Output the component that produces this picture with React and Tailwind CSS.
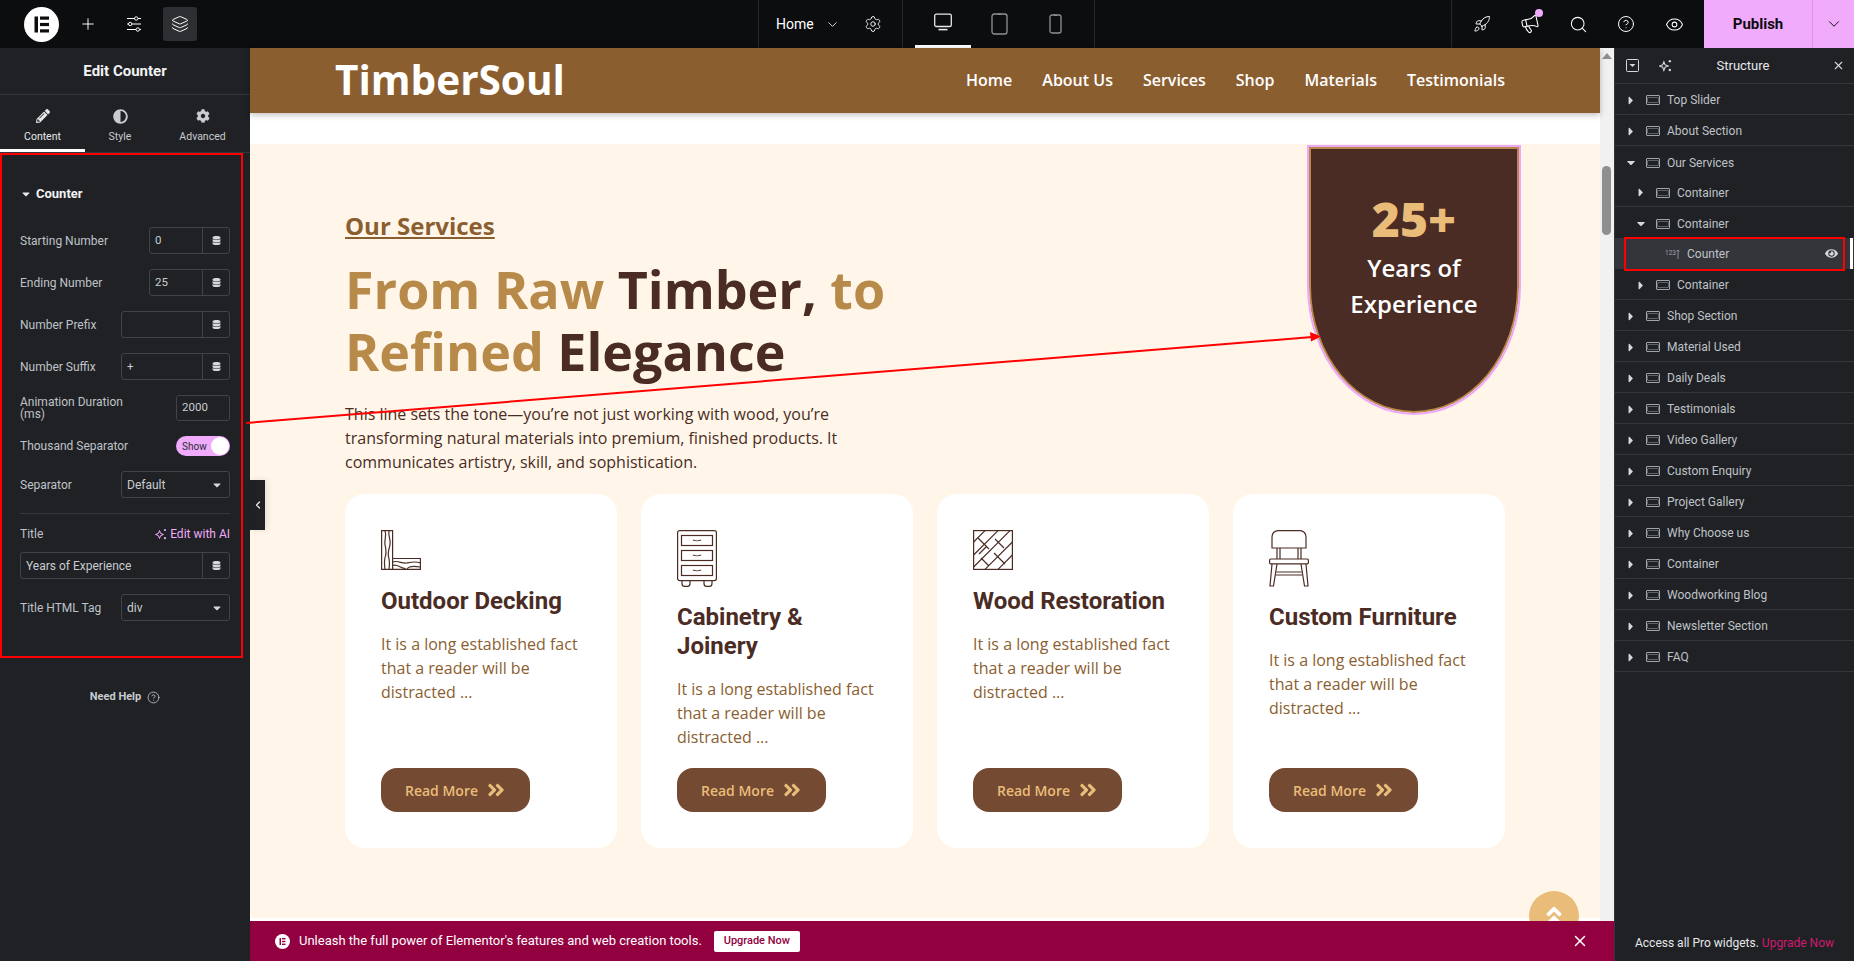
import { Rocket, Megaphone, Search, CircleHelp, Eye, Settings, ChevronDown, Layers, Plus, X, ChevronLeft } from 'lucide-react'
import { FaPencilAlt, FaAdjust, FaCog, FaDatabase, FaCaretDown, FaCaretRight, FaAngleDoubleRight, FaAngleDoubleUp, FaEye } from 'react-icons/fa'

const sans = "font-['Roboto','Liberation_Sans',sans-serif]"
const open = "font-['Open_Sans','Liberation_Sans',sans-serif]"

function ElementorLogo({ size = 35 }) {
  return (
    <svg width={size} height={size} viewBox="0 0 35 35">
      <circle cx="17.5" cy="17.5" r="17.5" fill="#fff" />
      <rect x="10.5" y="9.5" width="3.5" height="16" fill="#0c0d0e" />
      <rect x="16" y="9.5" width="9" height="3.2" fill="#0c0d0e" />
      <rect x="16" y="15.9" width="9" height="3.2" fill="#0c0d0e" />
      <rect x="16" y="22.3" width="9" height="3.2" fill="#0c0d0e" />
    </svg>
  )
}

function SlidersIcon() {
  return (
    <svg width="16" height="16" viewBox="0 0 16 16" fill="none" stroke="#fff" strokeWidth="1">
      <path d="M1 2.5h7.5M12 2.5h3M1 8h1.5M6 8h9M1 13.5h9M13.5 13.5H15" />
      <circle cx="10.2" cy="2.5" r="1.7" />
      <circle cx="4.2" cy="8" r="1.7" />
      <circle cx="11.8" cy="13.5" r="1.7" />
    </svg>
  )
}

function SparkIcon({ color = '#fff', size = 12 }) {
  return (
    <svg width={size} height={size} viewBox="0 0 12 12" fill={color}>
      <path d="M4.5 2.5 5.6 5.4 8.5 6.5 5.6 7.6 4.5 10.5 3.4 7.6.5 6.5 3.4 5.4Z" fill="none" stroke={color} strokeWidth="1" />
      <circle cx="10" cy="2" r="1.1" />
      <circle cx="10" cy="10.2" r="1.1" />
    </svg>
  )
}

function SectionIcon() {
  return (
    <svg width="14" height="10" viewBox="0 0 14 10" fill="none" stroke="#9da5ae" className="shrink-0">
      <rect x="0.5" y="0.5" width="13" height="9" rx="0.5" strokeWidth="1" />
      <path d="M2.5 2.5h9M2.5 7.5h9" strokeWidth="1" strokeDasharray="1 1" />
      <path d="M1 2.5v5M13 2.5v5" strokeWidth="1" />
    </svg>
  )
}

function MonitorIcon() {
  return (
    <svg width="20" height="19" viewBox="0 0 20 19" fill="none" stroke="#e6e8ea" strokeWidth="1.3">
      <rect x="1.7" y="1.2" width="16.6" height="12.3" rx="1.6" />
      <path d="M5.5 16.6h9" strokeWidth="1.6" />
    </svg>
  )
}

function TabletIcon() {
  return (
    <svg width="17" height="22" viewBox="0 0 17 22" fill="none" stroke="#8d9298" strokeWidth="1.3">
      <rect x="1" y="1" width="15" height="20" rx="2.2" />
      <path d="M7 1.3h3" />
    </svg>
  )
}

function PhoneIcon() {
  return (
    <svg width="13" height="20" viewBox="0 0 13 20" fill="none" stroke="#8d9298" strokeWidth="1.3">
      <rect x="1" y="1" width="11" height="18" rx="2" />
      <path d="M5 1.3h3" />
    </svg>
  )
}

function WoodIcon() {
  return (
    <svg width="40" height="40" viewBox="0 0 40 40" fill="none" stroke="#4a2c24" strokeWidth="1.2">
      <path d="M.6.6h11v38.800H.6zM11.600 28.500h27.800v10.900H11.600z" />
      <path d="M4 .6c2 5-1 9 0 14 1 5 2 8 0 13-1 4-.5 8 0 12M8 .6c-1 6 2 9 1 14-1 5-3 9-1 14 1 4 .5 7 0 11" />
      <path d="M11.600 32c6-2 9 2 14 1s9-2 13.800 0M11.600 35.500c5-2 8 3 13 3M26 39c2-3 8-3 13-2" />
    </svg>
  )
}

function CabinetIcon() {
  return (
    <svg width="40" height="57" viewBox="0 0 40 57" fill="none" stroke="#4a2c24" strokeWidth="1.2">
      <rect x=".6" y=".6" width="38.800" height="50" rx="2" />
      <rect x="4.500" y="5.500" width="31" height="10" />
      <rect x="4.500" y="20.500" width="31" height="10" />
      <rect x="4.500" y="35.500" width="31" height="10" />
      <path d="M16 10c2 1 6 1 8 0M16 25c2 1 6 1 8 0M16 40c2 1 6 1 8 0M5 50.500v3c0 2 1 2.900 2.500 2.900h3c1.500 0 2.500-.9 2.500-2.900v-3M27 50.500v3c0 2 1 2.900 2.500 2.900h3c1.500 0 2.500-.9 2.500-2.900v-3" />
    </svg>
  )
}

function ParquetIcon() {
  return (
    <svg width="40" height="40" viewBox="0 0 40 40" fill="none" stroke="#4a2c24" strokeWidth="1.2">
      <rect x=".6" y=".6" width="38.800" height="38.800" />
      <path d="M.6 12 12 .6M.6 25 25 .6M.6 37 37 .6M12 39.400 39.400 12M25 39.400 39.400 25M5 8l11 11M14 16l-8 8M22 9l9 9M21 23l11 11M8 28l8 8" />
    </svg>
  )
}

function ChairIcon() {
  return (
    <svg width="40" height="57" viewBox="0 0 40 57" fill="none" stroke="#4a2c24" strokeWidth="1.2">
      <path d="M3 18V7c0-4 3-6.400 6-6.400h22c3 0 6 2.400 6 6.400v11Z" />
      <rect x=".6" y="29" width="38.800" height="4.800" rx="1" />
      <path d="M8 18v11M11 18v11M29 18v11M32 18v11M3 34 1 56h3.500L8 34M37 34l2 22h-3.500L32 34M7.500 42h25M7 45h26" />
    </svg>
  )
}

function DataBtn() {
  return (
    <div className="flex h-full w-[27px] shrink-0 items-center justify-center border-l border-[#3f444b]">
      <FaDatabase className="text-[9px] text-[#d5d8dc]" />
    </div>
  )
}

function FieldRow({ label, width, value, className }) {
  return (
    <div className={`flex items-center justify-between ${className}`}>
      <span className="text-[12px] text-[#bfc3c9]">{label}</span>
      <div className="flex h-[27px] items-center rounded-[3px] border border-[#3f444b]" style={{ width }}>
        <span className="flex-1 pl-[5px] text-[11.500px] text-[#c8ccd1]">{value}</span>
        <DataBtn />
      </div>
    </div>
  )
}

function SelectRow({ label, value, className }) {
  return (
    <div className={`flex items-center justify-between ${className}`}>
      <span className="text-[12px] text-[#bfc3c9]">{label}</span>
      <div className="flex h-[27px] w-[109px] items-center justify-between rounded-[3px] border border-[#3f444b] pl-[5px] pr-[6px]">
        <span className="text-[12px] text-[#c8ccd1]">{value}</span>
        <FaCaretDown className="text-[12px] text-[#d5d8dc]" />
      </div>
    </div>
  )
}

function EditPanel() {
  return (
    <aside className={`flex w-[250px] shrink-0 flex-col bg-[#1f2124] ${sans}`}>
      <div className="flex h-[47px] items-center justify-center border-b border-[#33363b] text-[15px] font-bold text-[#f1f2f3]">Edit Counter</div>
      <div className="flex h-[58px] border-b border-[#33363b]">
        <div className="flex w-[85px] flex-col items-center border-b-[3px] border-white pt-[14px] text-[#e6e8ea]">
          <FaPencilAlt className="text-[14px]" />
          <span className="mt-[7px] text-[10.500px] leading-[13px]">Content</span>
        </div>
        <div className="flex w-[70px] flex-col items-center pt-[14px] text-[#c8ccd1]">
          <FaAdjust className="text-[15px]" />
          <span className="mt-[6px] text-[10.500px] leading-[13px]">Style</span>
        </div>
        <div className="flex w-[95px] flex-col items-center pt-[14px] text-[#c8ccd1]">
          <FaCog className="text-[14px]" />
          <span className="mt-[7px] text-[10.500px] leading-[13px]">Advanced</span>
        </div>
      </div>
      <div className="px-[20px]">
        <div className="flex items-center gap-[3px] pt-[32px] text-[13px] leading-[18px] font-bold text-[#f1f2f3]">
          <FaCaretDown className="text-[12px] text-[#e6e8ea]" />
          <span className="ml-[1px]">Counter</span>
        </div>
        <FieldRow className="mt-[24px]" label="Starting Number" width="81px" value="0" />
        <FieldRow className="mt-[15px]" label="Ending Number" width="81px" value="25" />
        <FieldRow className="mt-[15px]" label="Number Prefix" width="109px" value="" />
        <FieldRow className="mt-[15px]" label="Number Suffix" width="109px" value="+" />
        <div className="mt-[15px] flex items-center justify-between">
          <span className="w-[110px] text-[12px] leading-[12px] text-[#bfc3c9]">Animation Duration (ms)</span>
          <div className="flex h-[26px] w-[54px] items-center rounded-[3px] border border-[#3f444b] pl-[5px] text-[11.500px] text-[#c8ccd1]">2000</div>
        </div>
        <div className="mt-[15px] flex items-center justify-between">
          <span className="text-[12px] text-[#bfc3c9]">Thousand Separator</span>
          <div className="flex h-[20px] w-[54px] items-center justify-between rounded-full bg-[#f0abfc] pr-[1px] pl-[6px]">
            <span className="text-[10px] text-[#2b2c30]">Show</span>
            <span className="h-[18px] w-[18px] rounded-full bg-white" />
          </div>
        </div>
        <SelectRow className="mt-[15px]" label="Separator" value="Default" />
        <div className="mt-[15px] h-px bg-[#33363b]" />
        <div className="mt-[13px] flex h-[14px] items-center justify-between">
          <span className="text-[12px] text-[#bfc3c9]">Title</span>
          <span className="flex items-center gap-[3px] text-[12px] text-[#f0abfc]"><SparkIcon color="#f0abfc" />Edit with AI</span>
        </div>
        <div className="mt-[11px] flex h-[27px] items-center rounded-[3px] border border-[#3f444b]">
          <span className="flex-1 pl-[5px] text-[12px] text-[#c8ccd1]">Years of Experience</span>
          <DataBtn />
        </div>
        <SelectRow className="mt-[15px]" label="Title HTML Tag" value="div" />
      </div>
      <div className="mt-[68px] flex items-center justify-center gap-[6px] text-[11px] font-bold text-[#c8ccd1]">
        Need Help <CircleHelp size={13} strokeWidth={1.500} />
      </div>
    </aside>
  )
}

function Card({ icon, title }) {
  return (
    <div className="flex h-[354px] w-[272px] flex-col rounded-[20px] bg-white p-[36px]">
      <div className="flex min-h-[41px] shrink-0">{icon}</div>
      <h3 className={`mt-[16px] text-[24px] leading-[29px] font-bold text-[#4a2c24] ${sans}`}>{title}</h3>
      <p className="mt-[16px] text-[16px] leading-[24px] text-[#8b5e30]">It is a long established fact that a reader will be distracted ...</p>
      <div className="mt-auto flex h-[44px] w-[149px] shrink-0 items-center justify-center gap-[8px] rounded-[16px] bg-[#754a33] text-[14px] font-semibold text-[#e9bd79]">
        Read More <FaAngleDoubleRight className="text-[20px]" />
      </div>
    </div>
  )
}

function Preview() {
  return (
    <div className={`relative flex min-h-0 flex-1 ${open}`}>
      <div className="flex min-w-0 flex-1 flex-col bg-white">
        <header className="relative z-10 flex h-[65px] shrink-0 items-center justify-between bg-[#8b5e30] pr-[95px] pl-[85px] shadow-[0_2px_6px_rgba(0,0,0,0.25)]">
          <span className="text-[40.500px] leading-none font-bold text-white">TimberSoul</span>
          <nav className="flex -translate-y-px gap-[30px] text-[16px] font-semibold text-white">
            <span>Home</span><span>About Us</span><span>Services</span><span>Shop</span><span>Materials</span><span>Testimonials</span>
          </nav>
        </header>
        <div className="mt-[31px] h-[774px] shrink-0 bg-[#fff6e9] pt-[66px] pl-[95px]">
          <h4 className="text-[24px] leading-[32px] font-bold text-[#8b5e30] underline">Our Services</h4>
          <h2 className="mt-[16px] w-[620px] text-[52px] leading-[62px] font-bold text-[#b88a4a]">
            From Raw <span className="text-[#4a2c24]">Timber,</span> to<br />Refined <span className="text-[#4a2c24]">Elegance</span>
          </h2>
          <p className="mt-[20px] w-[520px] text-[16px] leading-[24px] text-[#4a2c24]">
            This line sets the tone—you’re not just working with wood, you’re transforming natural materials into premium, finished products. It communicates artistry, skill, and sophistication.
          </p>
          <div className="mt-[20px] flex gap-[24px]">
            <Card icon={<WoodIcon />} title="Outdoor Decking" />
            <Card icon={<CabinetIcon />} title="Cabinetry & Joinery" />
            <Card icon={<ParquetIcon />} title="Wood Restoration" />
            <Card icon={<ChairIcon />} title="Custom Furniture" />
          </div>
        </div>
      </div>

      {/* scrollbar */}
      <div className="relative w-[14px] shrink-0 bg-[#f1f1f1]">
        <div className="absolute top-[5px] left-[2px] h-0 w-0 border-x-[5px] border-b-[6px] border-x-transparent border-b-[#8f8f8f]" />
        <div className="absolute top-[118px] left-[2px] h-[69px] w-[9px] rounded-full bg-[#8f8f8f]" />
      </div>

      {/* counter badge */}
      <div className="absolute top-[99px] left-[1059px] flex h-[266px] w-[210px] flex-col items-center rounded-b-[105px_127px] border-2 border-[#b88a4a] bg-[#4a2c24] pt-[42px] outline-2 outline-[#efa8f9]">
        <span className="text-[48px] leading-[56px] font-extrabold text-[#e9bd79]">25+</span>
        <span className="mt-[3px] w-[150px] text-center text-[24px] leading-[36px] font-semibold text-white">Years of Experience</span>
      </div>

      {/* scroll to top */}
      <div className="absolute top-[843px] left-[1279px] flex h-[50px] w-[50px] items-start justify-center rounded-full bg-[#e9bd79] pt-[13px] text-white">
        <FaAngleDoubleUp className="text-[24px]" />
      </div>

      {/* panel collapse */}
      <div className="absolute top-[432px] left-0 flex h-[50px] w-[15px] items-center justify-center bg-[#1f2124] text-[#e6e8ea] shadow-[2px_0_6px_rgba(0,0,0,0.1)]">
        <ChevronLeft size={12} strokeWidth={2.500} />
      </div>
    </div>
  )
}

function UpgradeBar() {
  return (
    <div className={`relative z-10 flex h-[40px] shrink-0 items-center bg-[#93003f] pr-[25px] pl-[25px] text-white ${sans}`}>
      <svg width="15" height="15" viewBox="0 0 15 15">
        <circle cx="7.500" cy="7.500" r="7.500" fill="#fff" />
        <rect x="4.500" y="4" width="1.500" height="7" fill="#93003f" />
        <rect x="7" y="4" width="3.500" height="1.400" fill="#93003f" />
        <rect x="7" y="6.800" width="3.500" height="1.400" fill="#93003f" />
        <rect x="7" y="9.600" width="3.500" height="1.400" fill="#93003f" />
      </svg>
      <span className="ml-[9px] text-[13px]">Unleash the full power of Elementor's features and web creation tools.</span>
      <span className="ml-[12px] flex h-[21px] w-[86px] items-center justify-center rounded-[2px] bg-white text-[11px] font-medium text-[#93003f]">Upgrade Now</span>
      <X size={18} strokeWidth={2} className="ml-auto" />
    </div>
  )
}

const tree = [
  { label: 'Top Slider' },
  { label: 'About Section' },
  { label: 'Our Services', open: true },
  { label: 'Shop Section' },
  { label: 'Material Used' },
  { label: 'Daily Deals' },
  { label: 'Testimonials' },
  { label: 'Video Gallery' },
  { label: 'Custom Enquiry' },
  { label: 'Project Gallery' },
  { label: 'Why Choose us' },
  { label: 'Container' },
  { label: 'Woodworking Blog' },
  { label: 'Newsletter Section' },
  { label: 'FAQ' },
]

function TreeRow({ label, arrow, indent = 0, border, className = '' }) {
  return (
    <div className={`flex items-center pt-[2px] text-[12px] text-[#bfc3c9] ${border ? 'border-b border-[#33363b]' : ''} ${className}`} style={{ paddingLeft: 11 + indent }}>
      {arrow === 'r' ? <FaCaretRight className="w-[10px] shrink-0 text-[13px] text-[#d5d8dc]" /> : <FaCaretDown className="w-[10px] shrink-0 text-[13px] text-[#d5d8dc]" />}
      <span className="ml-[10px] flex"><SectionIcon /></span>
      <span className="ml-[7px]">{label}</span>
    </div>
  )
}

function StructurePanel() {
  return (
    <aside className={`relative flex w-[240px] shrink-0 flex-col border-l border-[#33363b] bg-[#1f2124] ${sans}`}>
      <div className="relative flex h-[36px] shrink-0 items-center justify-center border-b border-[#33363b] text-[13px] text-[#e6e8ea]">
        <svg width="13" height="13" viewBox="0 0 13 13" className="absolute left-[11px]" fill="none" stroke="#d5d8dc">
          <rect x=".5" y=".5" width="12" height="12" rx="1" />
          <path d="M3.500 5h6l-3 3z" fill="#d5d8dc" stroke="none" />
        </svg>
        <span className="absolute left-[44px] flex"><SparkIcon color="#d5d8dc" size={13} /></span>
        <span className="ml-[17px]">Structure</span>
        <X size={13} strokeWidth={2} className="absolute right-[9px] text-[#d5d8dc]" />
      </div>
      {tree.map((item) => (
        item.open ? (
          <div key={item.label} className="border-b border-[#33363b]">
            <TreeRow label={item.label} arrow="d" className="h-[31px]" />
            <TreeRow label="Container" arrow="r" indent={10} border className="h-[30px]" />
            <TreeRow label="Container" arrow="d" indent={10} className="h-[31px]" />
            <div className="flex h-[31px] items-center bg-[#33353a] pr-[12px] pl-[50px] text-[12px] text-[#bfc3c9]">
              <span className="flex w-[13px] items-center">
                <span className="text-[6.500px] leading-none text-[#9da5ae]">123</span>
                <svg width="4" height="10" viewBox="0 0 4 10" fill="none" stroke="#9da5ae" strokeWidth="0.8" className="shrink-0">
                  <path d="M2 10V1M.5 2.500 2 1l1.500 1.500" />
                </svg>
              </span>
              <span className="ml-[9px] flex-1">Counter</span>
              <FaEye className="mr-[4px] text-[13px] text-[#d5d8dc]" />
            </div>
            <TreeRow label="Container" arrow="r" indent={10} className="h-[30px]" />
          </div>
        ) : (
          <TreeRow key={item.label} label={item.label} arrow="r" border className="h-[31px] shrink-0" />
        )
      ))}
      <div className="absolute top-[190px] right-[1px] h-[31px] w-[3px] bg-white" />
      <div className="mt-auto pb-[9px] text-center text-[12px] text-[#e6e8ea]">
        Access all Pro widgets. <span className="text-[#d0196f]">Upgrade Now</span>
      </div>
    </aside>
  )
}

function TopIcon({ children }) {
  return <div className="flex w-[48px] items-center justify-center">{children}</div>
}

function TopBar() {
  return (
    <div className={`flex h-[48px] shrink-0 items-center bg-[#0c0d0e] text-white ${sans}`}>
      <div className="flex w-[758px] items-center pl-[24px]">
        <ElementorLogo />
        <Plus size={18} strokeWidth={1.300} className="ml-[20px]" />
        <span className="ml-[29px] flex"><SlidersIcon /></span>
        <span className="ml-[21px] flex h-[34px] w-[34px] items-center justify-center rounded-[3px] bg-[#2d2f33]"><Layers size={18} strokeWidth={1.300} /></span>
      </div>
      <div className="flex h-full w-[144px] items-center border-l border-[#26282b] pl-[17px] text-[14px]">
        <span>Home</span>
        <ChevronDown size={15} strokeWidth={1.300} className="ml-[11px]" />
        <Settings size={18} strokeWidth={1.200} className="ml-[24px]" />
      </div>
      <div className="flex h-full w-[193px] border-x border-[#26282b] pl-[12px]">
        <div className="flex h-full w-[56px] items-center justify-center border-b-[3px] border-white"><MonitorIcon /></div>
        <div className="flex h-full w-[56px] items-center justify-center"><TabletIcon /></div>
        <div className="flex h-full w-[56px] items-center justify-center"><PhoneIcon /></div>
      </div>
      <div className="flex-1" />
      <div className="flex h-full w-[253px] items-center border-l border-[#26282b] pl-[6px]">
        <TopIcon><Rocket size={18} strokeWidth={1.300} /></TopIcon>
        <TopIcon>
          <div className="relative flex">
            <Megaphone size={20} strokeWidth={1.300} className="-rotate-12" />
            <span className="absolute -top-[5px] right-[-3px] h-[8px] w-[8px] rounded-full bg-[#f0abfc]" />
          </div>
        </TopIcon>
        <TopIcon><Search size={19} strokeWidth={1.300} /></TopIcon>
        <TopIcon><CircleHelp size={18} strokeWidth={1.300} /></TopIcon>
        <TopIcon><Eye size={19} strokeWidth={1.300} /></TopIcon>
      </div>
      <div className="flex h-full w-[150px] bg-[#f0abfc] text-[#0c0d0e]">
        <div className="flex w-[109px] items-center justify-center border-r border-[#dd8ee9] text-[15px] font-bold">Publish</div>
        <div className="flex flex-1 items-center justify-center"><ChevronDown size={18} strokeWidth={1.300} /></div>
      </div>
    </div>
  )
}

export default function App() {
  return (
    <div className="relative flex h-[961px] w-[1854px] flex-col overflow-hidden bg-[#1f2124]">
      <TopBar />
      <div className="flex min-h-0 flex-1">
        <EditPanel />
        <div className="flex min-w-0 flex-1 flex-col">
          <Preview />
          <UpgradeBar />
        </div>
        <StructurePanel />
      </div>

      {/* red annotation boxes and arrow */}
      <div className="pointer-events-none absolute top-[153px] left-0 h-[505px] w-[243px] border-2 border-[#ff0000]" />
      <div className="pointer-events-none absolute top-[237px] left-[1624px] h-[34px] w-[221px] border-2 border-[#ff0000]" />
      <svg className="pointer-events-none absolute top-0 left-0" width="1854" height="961">
        <line x1="246" y1="423" x2="1312" y2="337" stroke="#ff0000" strokeWidth="2" />
        <path d="M1321 336.500 1310 332 1311 341.500Z" fill="#ff0000" />
      </svg>
    </div>
  )
}
